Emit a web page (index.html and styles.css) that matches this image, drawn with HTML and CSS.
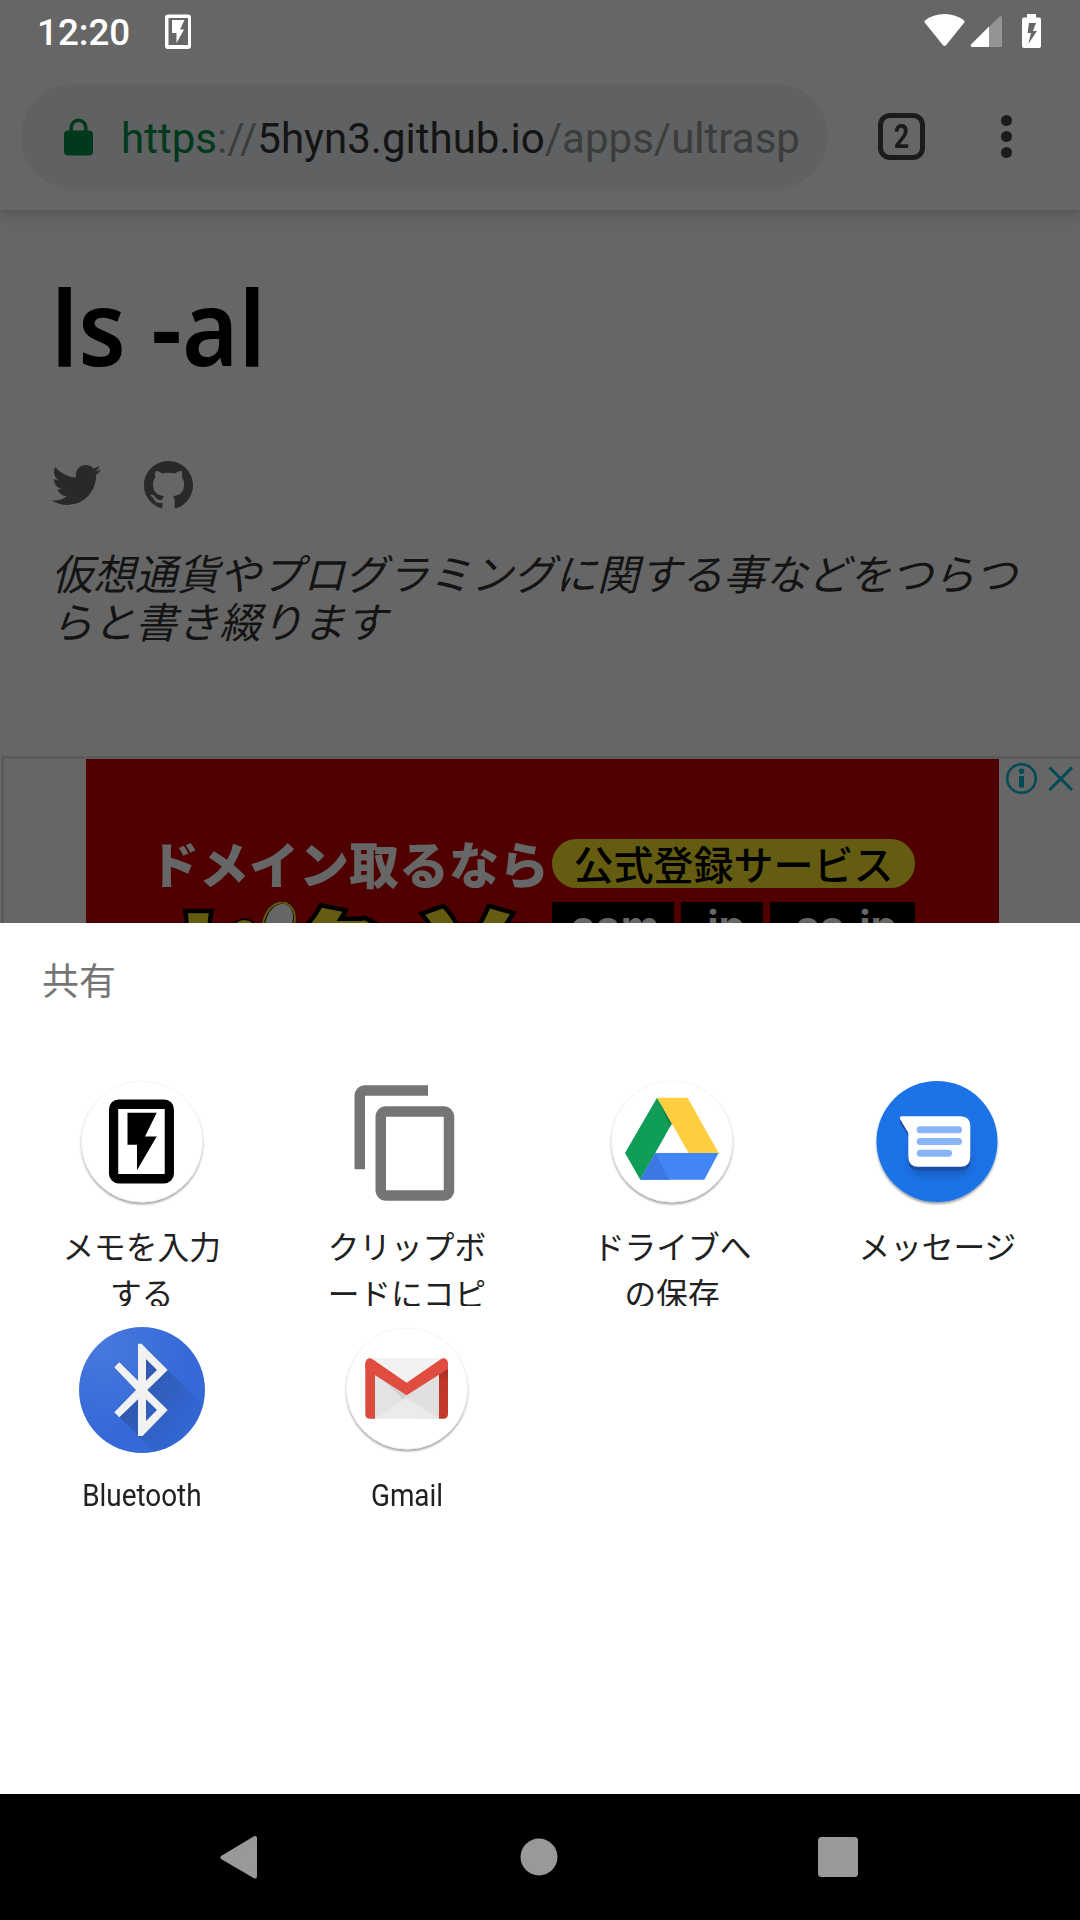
FILE: index.html
```html
<!DOCTYPE html>
<html lang="ja">
<head>
<meta charset="utf-8">
<title>共有</title>
<link rel="stylesheet" href="styles.css">
</head>
<body>
<div class="screen">
  <header class="status-bar">
    <span class="clock">12:20</span>
    <svg class="memo-note" width="26" height="36" viewBox="0 0 26 36"><path fill="#fff" fill-rule="evenodd" d="M3 0.5H23Q26 0.5 26 3.5V32Q26 35 23 35H3Q0 35 0 32V3.500Q0 .5 3 .5ZM3.500 4V31H23V4Z"/><path fill="#fff" d="M7 6H19.500L15 15.500H19L11.500 29V19H7Z"/></svg>
    <svg class="status-icons" width="120" height="36" viewBox="0 0 120 36">
      <path fill="#fff" d="M.7 8.500Q0 7.500 1 6.500Q9 0 20.500 0T40 6.500Q41 7.500 40.300 8.500L22 31.300Q20.500 32.500 19 31.300Z"/>
      <path fill="#949494" d="M65 13V33H76.500Q78 33 78 31.500V3.500Q77.500 1 75.500 2.500Z"/>
      <path fill="#fff" d="M65 12.500V33H48.500Q46 32.500 47 30.500Z"/>
      <path fill="#fff" fill-rule="evenodd" d="M103 0H112V3.500H115Q117 3.500 117 5.500V32Q117 34 115 34H100Q98 34 98 32V5.500Q98 3.500 100 3.500H103ZM105 9L103.500 19H107L104.300 30L113 17H109L112 9Z"/>
    </svg>
  </header>

  <div class="toolbar">
    <div class="omnibox">
      <svg class="lock" width="29" height="38" viewBox="0 0 29 38"><path fill="#00391b" fill-rule="evenodd" d="M5.500 12.500V9.500A9 9 0 0 1 23.500 9.500V12.500H25Q29 12.500 29 16.500V33.500Q29 37.500 25 37.500H4Q0 37.500 0 33.500V16.500Q0 12.500 4 12.500ZM9 12.500H20V9.500A5.500 5.500 0 0 0 9 9.500Z"/></svg>
      <span class="url"><span class="scheme">https</span><span class="muted">://</span>5hyn3.github.io<span class="muted">/apps/ultrasp</span></span>
    </div>
    <div class="tabs"><span>2</span></div>
    <div class="menu"><i></i><i></i><i></i></div>
  </div>

  <main class="page">
    <h1><span>ls -al</span></h1>
    <div class="social">
      <svg width="49" height="42" viewBox="0 1.700 24 20.600" preserveAspectRatio="none"><path fill="#292929" d="M23.954 4.569c-.885.389-1.830.654-2.825.775 1.014-.611 1.794-1.574 2.163-2.723-.951.555-2.005.959-3.127 1.184-.896-.959-2.173-1.559-3.591-1.559-2.717 0-4.920 2.203-4.920 4.917 0 .390.045.765.127 1.124C7.691 8.094 4.066 6.130 1.640 3.161c-.427.722-.666 1.561-.666 2.475 0 1.710.870 3.213 2.188 4.096-.807-.026-1.566-.248-2.228-.616v.061c0 2.385 1.693 4.374 3.946 4.827-.413.111-.849.171-1.296.171-.314 0-.615-.030-.916-.086.631 1.953 2.445 3.377 4.604 3.417-1.680 1.319-3.809 2.105-6.102 2.105-.390 0-.779-.023-1.170-.067 2.189 1.394 4.768 2.209 7.557 2.209 9.054 0 13.999-7.496 13.999-13.986 0-.209 0-.420-.015-.630.961-.689 1.800-1.560 2.460-2.548l-.047-.020z"/></svg>
      <svg width="49" height="48" viewBox="0 0 16 15.800" preserveAspectRatio="none"><path fill="#292929" d="M8 0C3.580 0 0 3.580 0 8c0 3.540 2.290 6.530 5.470 7.590.4.070.55-.17.55-.38 0-.19-.01-.82-.01-1.490-2.010.37-2.530-.49-2.690-.94-.09-.23-.48-.94-.82-1.130-.28-.15-.68-.52-.01-.53.63-.01 1.080.58 1.230.82.72 1.210 1.870.87 2.330.66.07-.52.28-.87.51-1.070-1.780-.2-3.640-.89-3.640-3.950 0-.87.31-1.590.82-2.150-.08-.2-.36-1.020.08-2.120 0 0 .67-.21 2.200.82.64-.18 1.320-.27 2-.27s1.360.09 2 .27c1.530-1.040 2.200-.82 2.200-.82.44 1.100.16 1.920.08 2.120.51.56.82 1.270.82 2.150 0 3.070-1.870 3.750-3.650 3.950.29.25.54.73.54 1.480 0 1.070-.01 1.930-.01 2.200 0 .21.15.46.55.38A8.010 8.010 0 0 0 16 8c0-4.420-3.580-8-8-8z"/></svg>
    </div>
    <p class="tagline">仮想通貨やプログラミングに関する事などをつらつらと書き綴ります</p>
  </main>

  <section class="ad">
    <div class="banner">
      <div class="ad-head"><span class="ad-title">ドメイン取るなら</span><span class="ad-pill">公式登録サービス</span></div>
      <div class="ad-row">
        <div class="brand"><span>お</span><span>名</span><span>前</span>
          <svg class="mascot" width="70" height="28" viewBox="0 0 70 28"><path fill="none" stroke="#000" stroke-width="6" d="M3 24Q12 15 22 24"/><path fill="none" stroke="#645c11" stroke-width="3" d="M3 24Q12 15 22 24"/><ellipse cx="47" cy="20" rx="13" ry="19" fill="#666" stroke="#000" stroke-width="5" transform="rotate(22 47 20)"/><ellipse cx="47" cy="20" rx="15" ry="20" fill="none" stroke="#645c11" stroke-width="2" transform="rotate(22 47 20)"/></svg>
        </div>
        <div class="domains"><span class="d1">.com</span><span class="d2">.jp</span><span class="d3">.co.jp</span></div>
      </div>
    </div>
    <svg class="ad-choices" width="81" height="40" viewBox="0 0 81 40"><g fill="none" stroke="#004b55" stroke-width="2.500"><circle cx="22.500" cy="19.500" r="14.300"/><path stroke-width="3" d="M50.500 8.500L73 31M73 8.500L50.500 31"/></g><path fill="#004b55" d="M20 17H25V28.500H20Z"/><circle cx="22.500" cy="12.300" r="2.800" fill="#004b55"/></svg>
  </section>

  <section class="sheet">
    <h2>共有</h2>
    <div class="targets">
      <div class="target">
        <svg width="126" height="126" viewBox="0 0 126 126"><defs><filter id="drop" x="-20%" y="-20%" width="140%" height="140%"><feDropShadow dx="0" dy="2" stdDeviation="1.300" flood-opacity=".38"/></filter><filter id="soft" x="-40%" y="-40%" width="180%" height="180%"><feGaussianBlur stdDeviation="5"/></filter></defs>
          <circle cx="63" cy="61.500" r="60.500" fill="#fff" stroke="#eee" stroke-width=".6" filter="url(#drop)"/>
          <rect x="34.700" y="24.200" width="55.500" height="74.500" rx="5" fill="none" stroke="#000" stroke-width="9.500"/><path fill="#fff" d="M39.500 29H85.500V94H39.500Z"/><path d="M48.500 32.700H77.700L66 56.500H77.700L58 90.300V64.700H48.500Z"/></svg>
        <p>メモを入力<br>する</p>
      </div>
      <div class="target">
        <svg width="126" height="126" viewBox="0 0 24 24"><path fill="#757575" d="M16 1H4c-1.100 0-2 .9-2 2v14h2V3h12V1zm3 4H8c-1.100 0-2 .9-2 2v14c0 1.100.9 2 2 2h11c1.100 0 2-.9 2-2V7c0-1.100-.9-2-2-2zm0 16H8V7h11v14z"/></svg>
        <p>クリップボ<br>ードにコピ</p>
      </div>
      <div class="target">
        <svg width="126" height="126" viewBox="0 0 126 126">
          <circle cx="63" cy="61.500" r="60.500" fill="#fff" stroke="#eee" stroke-width=".6" filter="url(#drop)"/>
          <path fill="#0f9d58" d="M48 17.700L63 43.300L31.300 99.700L16 73Z"/><path fill="#0c8449" d="M48 17.700L63 43.300L61 46.500Z"/><path fill="#ffcd40" d="M48 17.700H78.600L109.600 73H79.600Z"/><path fill="#4285f4" d="M46.300 73H109.600L95.300 99.700H31.300Z"/><path fill="#3d77e3" d="M46.300 73L60.600 99.700H31.300Z"/></svg>
        <p>ドライブへ<br>の保存</p>
      </div>
      <div class="target">
        <svg width="126" height="126" viewBox="0 0 126 126">
          <circle cx="63" cy="61.500" r="60.500" fill="#1a73e8" filter="url(#drop)"/>
          <rect x="36" y="58" width="60" height="38" rx="10" fill="#174ea6" opacity=".6" filter="url(#soft)"/>
          <path fill="#174fa8" d="M26 38V43L34.300 56V80Q34.300 90.500 44.300 90.500H86.300Q96.300 90.500 96.300 80V50Z"/>
          <path fill="#fff" d="M28 36.300H86.300Q96.300 36.300 96.300 46.300V76.700Q96.300 86.700 86.300 86.700H44.300Q34.300 86.700 34.300 76.700V53L26.200 39.300Q25 36.600 28 36.300Z"/>
          <path stroke="#8ab4f8" stroke-width="7" stroke-linecap="round" d="M46.200 49.700H84.500M46.200 61.500H84.500M46.200 73.200H74.500"/></svg>
        <p>メッセージ</p>
      </div>
      <div class="target">
        <svg width="126" height="126" viewBox="0 0 126 126"><defs><radialGradient id="blue" cx=".2" cy=".15" r=".7"><stop offset="0" stop-color="#4778dc"/><stop offset="1" stop-color="#3569d8"/></radialGradient><linearGradient id="long" x1="0" y1="0" x2="1" y2="1"><stop offset=".3" stop-color="#2a4f9c" stop-opacity=".65"/><stop offset=".75" stop-color="#2f5ec4" stop-opacity=".15"/></linearGradient><clipPath id="disc"><circle cx="63" cy="63" r="63"/></clipPath></defs>
          <circle cx="63" cy="63" r="63" fill="url(#blue)"/>
          <path clip-path="url(#disc)" fill="url(#long)" d="M67 20L88.700 43L132 86V150H100L40.300 90L59 72V52L67 52Z"/>
          <path fill="#f1f1f1" fill-rule="evenodd" d="M88.700 43L62.500 16.700H59V53.700L40.300 35.300L35.300 40.300L57 63L35.300 85.300L40.300 90.300L59 72.300V109H63.500L88.700 83L68.300 63ZM67 32L78 43L67 53.700ZM67 72.300L78 83L67 94Z"/></svg>
        <p class="latin"><span>Bluetooth</span></p>
      </div>
      <div class="target">
        <svg width="126" height="126" viewBox="0 0 126 126"><defs><linearGradient id="side" x1="0" y1="0" x2="0" y2="1"><stop offset="0" stop-color="#9e2a20"/><stop offset=".3" stop-color="#c0372a"/><stop offset="1" stop-color="#c5392b"/></linearGradient></defs>
          <circle cx="63" cy="61.500" r="60.500" fill="#fff" stroke="#eee" stroke-width=".6" filter="url(#drop)"/>
          <path fill="#e3e3e3" d="M26 31.200H99V91.500H26Z"/><path fill="#f2f2f2" d="M26 31.200H99L62.700 56Z"/><path fill="#e0e0e0" d="M62.700 68L95 46V91.500H74L60 70Z"/><path fill="#ebebeb" d="M62.700 71L95 91.500H31Z"/><path fill="#d0d0d0" d="M31 45L62.700 68L59 72Z"/>
          <path fill="#db4c3f" d="M21.300 36H31V91.700H26Q21.300 91.700 21.300 87Z"/><path fill="url(#side)" d="M95 40H104V87Q104 91.700 99.300 91.700H95Z"/>
          <path fill="#e04c3f" d="M21.300 42V36Q22 31 26.500 31.200L29 32.500L62.700 55.700L96.300 32.500L99 31.200Q103.500 31 104 36V42L62.700 68.300Z"/></svg>
        <p class="latin"><span>Gmail</span></p>
      </div>
    </div>
  </section>

  <nav class="nav-bar">
    <svg width="40" height="44" viewBox="0 0 40 44"><path fill="#999" stroke="#999" stroke-width="4" stroke-linejoin="round" d="M3.500 22.500L36 3V41.500Z"/></svg>
    <svg width="38" height="38" viewBox="0 0 38 38"><circle cx="19" cy="19" r="18.500" fill="#999"/></svg>
    <svg width="40" height="40" viewBox="0 0 40 40"><rect width="40" height="40" rx="3.500" fill="#999"/></svg>
  </nav>
</div>
</body>
</html>
```
FILE: styles.css
```css
* { box-sizing: border-box; }
body { margin: 0; background: #666; font-family: Roboto, "Noto Sans CJK JP", sans-serif; }
h1, h2, p { margin: 0; font-weight: 400; }
svg { display: block; flex: none; }
.screen { width: 1080px; height: 1920px; display: flex; flex-direction: column; overflow: hidden; background: #666; }

.status-bar { height: 63px; flex: none; display: flex; align-items: flex-start; padding: 14px 36px 0 37px; color: #fff; }
.clock { width: 128px; font-size: 36.750px; font-weight: 500; line-height: 38px; }
.status-icons { margin-left: auto; }

.toolbar { height: 147px; flex: none; display: flex; align-items: center; padding: 0 68px 0 21px; box-shadow: 0 2px 16px rgba(0, 0, 0, .25); clip-path: inset(0 0 -24px 0); }
.omnibox { width: 807px; height: 105px; display: flex; align-items: center; padding-left: 43px; border-radius: 53px; background: #5f6163; overflow: hidden; }
.lock { margin-right: 28px; }
.url { font-size: 42px; line-height: 52px; letter-spacing: .02px; color: #141414; white-space: nowrap; padding-top: 4px; }
.scheme { color: #00391b; }
.muted { color: #3b3d3c; }
.tabs { width: 47px; height: 47px; margin-left: 50px; border: 5px solid #1a1b1c; border-radius: 12px; display: flex; align-items: center; justify-content: center; color: #1a1b1c; font-size: 33px; font-weight: 700; }
.tabs span { transform: scaleX(.82); }
.menu { margin-left: auto; display: flex; flex-direction: column; gap: 5px; }
.menu i { width: 11px; height: 11px; border-radius: 50%; background: #1a1b1c; }

.page { height: 546px; flex: none; padding: 53px 52px 0; }
h1 { height: 198px; font: 600 105px/126px "Noto Sans", sans-serif; color: #000; white-space: nowrap; }
h1 span { display: inline-block; transform: scaleX(.92); transform-origin: left; margin-left: -1px; }
.social { height: 48px; display: flex; align-items: center; gap: 43px; }
.tagline { padding-top: 39px; margin-left: -1px; font: italic 42px/47.500px "Noto Sans CJK JP", sans-serif; color: #141414; }

.ad { height: 167px; flex: none; margin-left: 1px; border: 3px solid #5a5a5a; border-width: 3px 0 0 3px; display: flex; padding-left: 82px; overflow: hidden; }
.banner { width: 913px; flex: none; background: #500000; padding: 80px 84px 0 66px; font-family: "Noto Sans CJK JP", sans-serif; }
.ad-head { height: 49px; display: flex; }
.ad-title { width: 403px; margin-left: -3px; font-size: 50px; line-height: 46px; font-weight: 800; color: #666; white-space: nowrap; }
.ad-pill { width: 363px; height: 49px; border-radius: 25px; background: #645c11; color: #000; font-size: 40px; line-height: 48px; font-weight: 500; text-align: center; white-space: nowrap; }
.ad-row { height: 60px; display: flex; padding-top: 14px; }
.brand { width: 400px; flex: none; position: relative; display: flex; font-size: 126px; line-height: 120px; font-weight: 900; color: #645c11; -webkit-text-stroke: 9px #000; paint-order: stroke fill; }
.mascot { position: absolute; left: 80px; top: 0; }
.domains { display: flex; gap: 7px; }
.domains span { height: 60px; background: #000; color: #666; font: 700 42px/48px Inter, sans-serif; text-align: right; }
.domains .d1 { width: 122px; padding-right: 15px; }
.domains .d2 { width: 82px; padding-right: 18px; }
.domains .d3 { width: 145px; padding-right: 18px; }

.sheet { height: 871px; flex: none; background: #fff; padding: 29px 9px 0; }
h2 { height: 128px; padding-left: 33px; font: 400 37px/54px "Noto Sans CJK JP", sans-serif; color: #757575; }
.targets { display: grid; grid-template-columns: repeat(4, 265.250px); grid-auto-rows: 247px; }
.target { display: flex; flex-direction: column; align-items: center; }
.target p { height: 84px; margin-top: 16px; overflow: hidden; text-align: center; font: 400 31.700px/46.500px "Noto Sans CJK JP", sans-serif; color: #212121; white-space: nowrap; }
.target .latin { margin-top: 20px; font-family: Roboto, sans-serif; }
.latin span { display: inline-block; transform: scaleX(.88); }

.nav-bar { height: 126px; flex: none; background: #000; display: flex; align-items: center; justify-content: space-between; padding: 0 222px 0 219px; }
```
